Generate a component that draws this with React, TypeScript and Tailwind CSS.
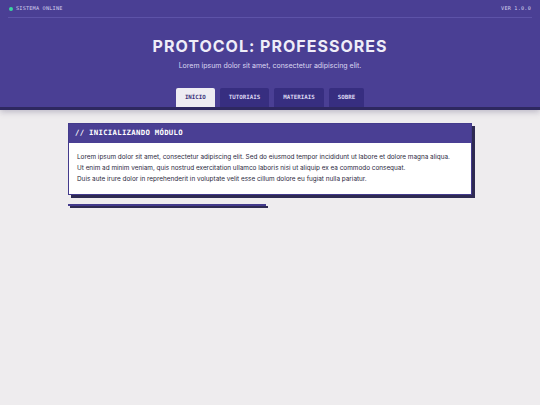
const mono = { fontFamily: '"DejaVu Sans Mono", "Liberation Mono", monospace' };

const tabs = ["INÍCIO", "TUTORIAIS", "MATERIAIS", "SOBRE"];

export default function App() {
  return (
    <div className="min-h-[405px] bg-[#eeecee] font-['Inter',sans-serif]">
      <header className="bg-[#4a3f94] border-b-[3px] border-[#2e2860] shadow-[0_2px_6px_rgba(40,30,80,0.25)]">
        <div className="mx-2 flex h-[18px] items-center justify-between border-b border-[#5d53a8] pl-[1px] pr-[1px] pt-[1px]">
          <div className="flex items-center gap-[3px]">
            <span className="h-[4px] w-[4px] rounded-full bg-[#3ad6a0]" />
            <span className="text-[5.2px] tracking-[0.2px] text-[#d4d0ee]" style={mono}>
              SISTEMA ONLINE
            </span>
          </div>
          <span className="text-[5.2px] tracking-[0.2px] text-[#d4d0ee]" style={mono}>
            VER 1.0.0
          </span>
        </div>
        <div className="flex flex-col items-center pt-[18px]">
          <h1 className="text-[16px] font-bold leading-[20px] tracking-[1px] text-[#efedf8]">
            PROTOCOL: PROFESSORES
          </h1>
          <p className="mt-[5px] text-[7px] leading-[9px] text-[#dcd8f2]">
            Lorem ipsum dolor sit amet, consectetur adipiscing elit.
          </p>
          <nav className="mt-[18px] flex gap-[5px]">
            {tabs.map((t, i) => (
              <div
                key={t}
                className={
                  i === 0
                    ? "flex h-[19px] items-center rounded-t-[2px] bg-[#eeecf2] px-[9px] text-[5.8px] font-bold text-[#3a327a]"
                    : "flex h-[19px] items-center rounded-t-[2px] bg-[#372e80] px-[9px] text-[5.8px] font-bold text-[#dcd8f2]"
                }
                style={mono}
              >
                {t}
              </div>
            ))}
          </nav>
        </div>
      </header>

      <main className="mx-auto mt-[13px] w-[404px]">
        <section className="border border-[#433a8c] bg-white shadow-[3px_3px_0_#2e2a52]">
          <div className="flex h-[19px] items-center bg-[#4a3f94] px-[6px]">
            <h2 className="text-[7.3px] font-bold tracking-[0.3px] text-white" style={mono}>
              // INICIALIZANDO MÓDULO
            </h2>
          </div>
          <div className="px-[8px] pb-[9px] pt-[9px] text-[6.4px] leading-[11px] text-[#2b2840]">
            <p>
              Lorem ipsum dolor sit amet, consectetur adipiscing elit. Sed do eiusmod tempor
              incididunt ut labore et dolore magna aliqua.
            </p>
            <p>Ut enim ad minim veniam, quis nostrud exercitation ullamco laboris nisi ut aliquip ex ea commodo consequat.</p>
            <p>Duis aute irure dolor in reprehenderit in voluptate velit esse cillum dolore eu fugiat nulla pariatur.</p>
          </div>
        </section>
        <div className="mt-[9px] h-[2px] w-[198px] bg-[#433a8c] shadow-[2px_2px_0_#2e2a52]" />
      </main>
    </div>
  );
}
